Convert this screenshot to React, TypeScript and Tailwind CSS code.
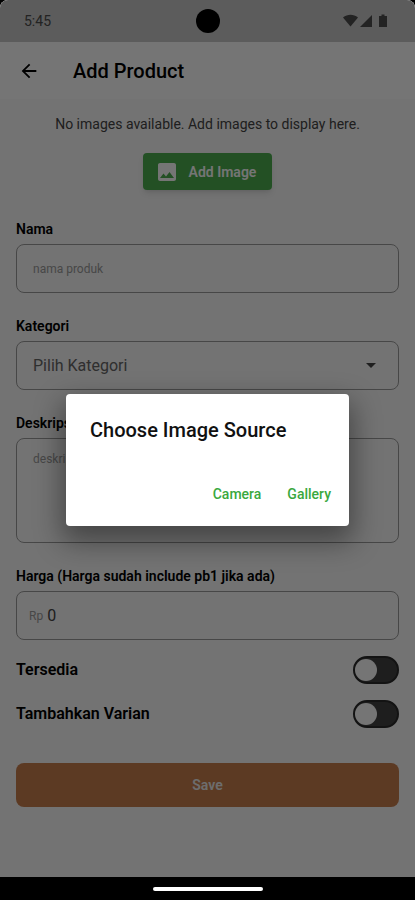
import React, { useState } from "react";
import { MdArrowBack, MdArrowDropDown, MdImage } from "react-icons/md";

interface FieldProps {
  id: string;
  label: string;
  children: React.ReactNode;
}

const Field: React.FC<FieldProps> = ({ id, label, children }) => (
  <div className="flex flex-col">
    <label htmlFor={id} className="mb-1.5 text-sm leading-[18px] font-semibold text-black">
      {label}
    </label>
    {children}
  </div>
);

interface SwitchRowProps {
  id: string;
  label: string;
}

const SwitchRow: React.FC<SwitchRowProps> = ({ id, label }) => {
  const [checked, setChecked] = useState(false);

  return (
    <div className="flex items-center justify-between">
      <label htmlFor={id} className="text-base font-semibold text-black">
        {label}
      </label>
      <input
        id={id}
        type="checkbox"
        role="switch"
        checked={checked}
        onChange={() => setChecked(!checked)}
        className="flex h-7 w-[46px] appearance-none items-center rounded-full border-2 border-[#2a2a2a] bg-[#434343] before:size-[22px] before:rounded-full before:bg-white checked:justify-end checked:bg-[#4caf50]"
      />
    </div>
  );
};

const StatusBar: React.FC = () => (
  <div className="flex h-[42px] items-center justify-between bg-[#c8c8c8] pr-[26px] pl-6 text-[#4c4c4c]">
    <span className="text-sm">5:45</span>
    <svg width="46" height="16" viewBox="0 0 46 16" fill="currentColor" aria-hidden="true">
      <path d="M0 4.5C4.5.8 10.500.8 15 4.500L7.500 13.500z" />
      <path d="M29 2v12H17z" />
      <path d="M36 3h2.500V1.500h3V3H44v11h-8z" />
    </svg>
  </div>
);

const ImageSourceDialog: React.FC<{ onClose: () => void }> = ({ onClose }) => (
  <div className="absolute inset-0 flex items-center justify-center bg-black/54 px-[66px] pt-[42px]">
    <div
      role="dialog"
      aria-modal="true"
      aria-labelledby="dialog-title"
      className="w-full max-w-sm rounded bg-white pt-[22px] pb-3 shadow-[0_12px_28px_4px_rgba(0,0,0,0.4)]"
    >
      <h2 id="dialog-title" className="px-6 text-xl leading-7 font-medium text-[#111111]">
        Choose Image Source
      </h2>
      <div className="mt-[30px] flex justify-end gap-2.5 px-2.5">
        <button onClick={onClose} className="h-10 px-2 text-sm font-medium text-[#3aa83e]">
          Camera
        </button>
        <button onClick={onClose} className="h-10 px-2 text-sm font-medium text-[#3aa83e]">
          Gallery
        </button>
      </div>
    </div>
  </div>
);

const App: React.FC = () => {
  const [isDialogOpen, setIsDialogOpen] = useState(true);

  return (
    <div className="flex min-h-screen flex-col bg-black font-[Roboto,sans-serif]">
      <div className="relative flex flex-1 flex-col overflow-hidden rounded-t-lg bg-[#fafafa]">
        <StatusBar />

        {/* App bar */}
        <header className="flex h-[57px] items-center gap-[33px] bg-white px-[18px] text-black">
          <button aria-label="Back">
            <MdArrowBack size={22} />
          </button>
          <h1 className="text-xl font-medium">Add Product</h1>
        </header>

        <form className="flex flex-1 flex-col px-4 pt-4" onSubmit={(e) => e.preventDefault()}>
          <p className="text-center text-sm leading-[18px] text-[#444444]">
            No images available. Add images to display here.
          </p>
          <button
            type="button"
            onClick={() => setIsDialogOpen(true)}
            className="mt-5 flex h-[37px] items-center gap-2.5 self-center rounded bg-[#4caf50] pr-4 pl-3 text-sm font-semibold text-white shadow-md"
          >
            <MdImage size={24} />
            Add Image
          </button>

          <div className="mt-[30px] flex flex-col gap-6">
            <Field id="nama" label="Nama">
              <input
                id="nama"
                placeholder="nama produk"
                className="h-[49px] rounded-lg border border-[#9c9c9c] px-4 text-xs text-black placeholder:text-[#9c9c9c]"
              />
            </Field>

            <Field id="kategori" label="Kategori">
              <div className="relative flex">
                <select
                  id="kategori"
                  className="h-[49px] w-full appearance-none rounded-lg border border-[#9c9c9c] px-4 text-base text-[#666666]"
                >
                  <option>Pilih Kategori</option>
                </select>
                <MdArrowDropDown
                  size={24}
                  className="pointer-events-none absolute top-3 right-4 text-[#444444]"
                />
              </div>
            </Field>

            <Field id="deskripsi" label="Deskripsi">
              <textarea
                id="deskripsi"
                placeholder="deskripsi produk"
                className="h-[105px] resize-none rounded-lg border border-[#9c9c9c] px-4 py-3 text-xs text-black placeholder:text-[#9c9c9c]"
              />
            </Field>

            <Field id="harga" label="Harga (Harga sudah include pb1 jika ada)">
              <div className="flex h-[49px] items-center gap-1 rounded-lg border border-[#9c9c9c] px-3 text-[#9c9c9c]">
                <span className="text-xs">Rp</span>
                <input
                  id="harga"
                  defaultValue="0"
                  inputMode="numeric"
                  className="min-w-0 flex-1 text-base text-[#444444] outline-none"
                />
              </div>
            </Field>
          </div>

          <div className="mt-4 flex flex-col gap-4">
            <SwitchRow id="tersedia" label="Tersedia" />
            <SwitchRow id="varian" label="Tambahkan Varian" />
          </div>

          <button
            type="submit"
            className="mt-[35px] h-11 rounded-lg bg-[#c87e4e] text-sm font-semibold text-[#eeeeee]"
          >
            Save
          </button>
        </form>

        {isDialogOpen && <ImageSourceDialog onClose={() => setIsDialogOpen(false)} />}

        {/* Camera cutout */}
        <div className="absolute top-[9px] left-1/2 size-6 -translate-x-1/2 rounded-full bg-black" />
      </div>

      {/* Gesture bar */}
      <div className="flex h-[23px] items-center justify-center bg-black">
        <div className="h-1 w-[110px] rounded-full bg-white" />
      </div>
    </div>
  );
};

export default App;
